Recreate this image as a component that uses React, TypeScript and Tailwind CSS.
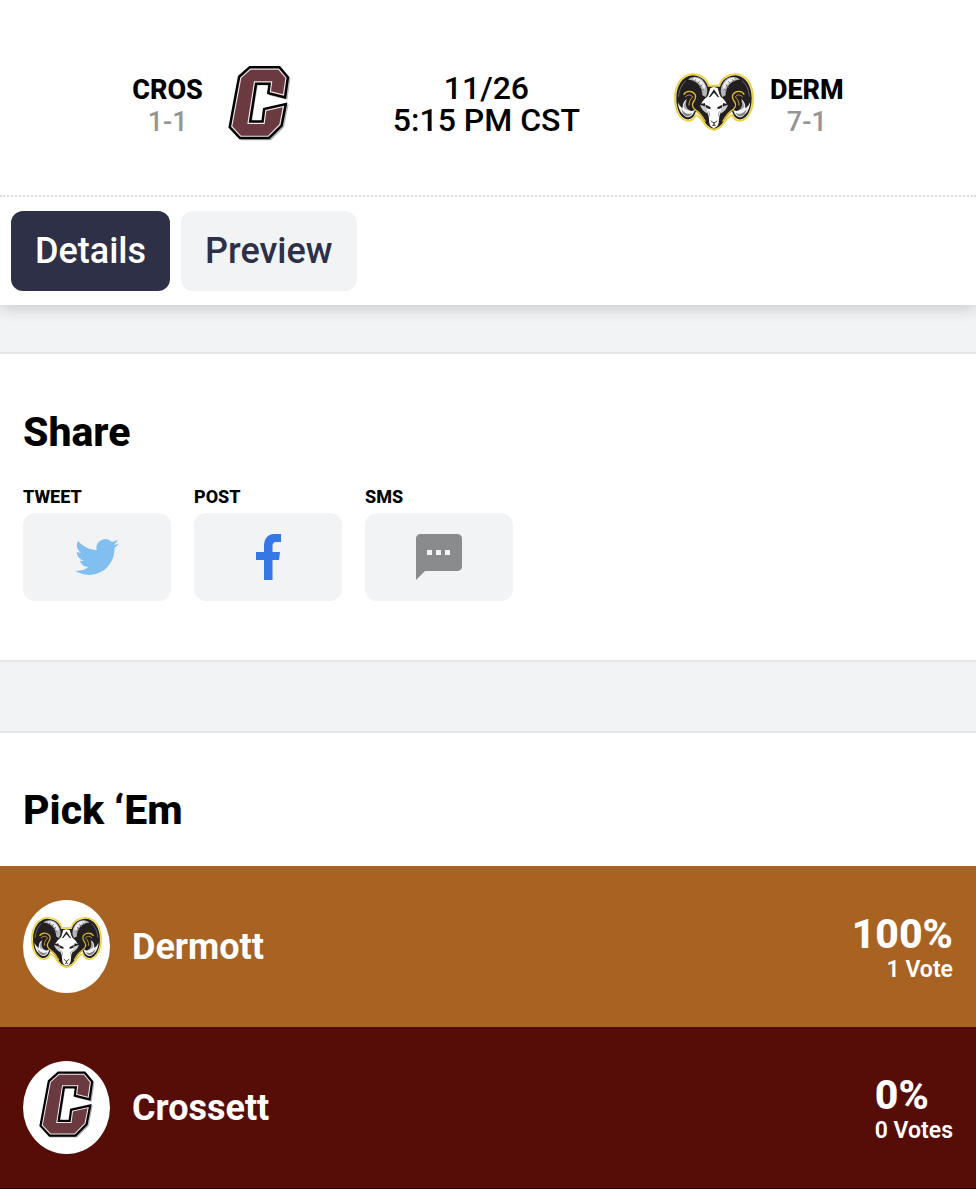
import type { ReactNode } from "react";

function CrossettLogo({ className }: { className?: string }) {
  const c =
    "107,44 190,44 211,69 204,118 168,109 172,79 117,79 97,207 149,207 154,168 203,157 193,208 159,242 78,242 52,214 79,69";
  return (
    <svg viewBox="12 21 240 240" className={className} role="img" aria-label="Crossett">
      <polygon points={c} transform="translate(5 4)" fill="#b5b5b5" stroke="#b5b5b5" strokeWidth="20" />
      <polygon points={c} fill="#000" stroke="#000" strokeWidth="22" />
      <polygon points={c} fill="#fff" stroke="#f3e9ea" strokeWidth="7" />
      <polygon points={c} fill="#6b3a41" />
      <polygon points="128,91 158,91 153,122 222,139 139,152 135,194 112,194" fill="#fff" />
    </svg>
  );
}

function RamHalf() {
  return (
    <g>
      <path
        d="M147 79 L130 79 C124 56 104 43 80 44 C50 46 29 76 29 114 C28 150 42 180 65 184 C77 186 86 180 91 168 C99 168 107 178 113 187 C121 201 133 210 147 212 Z"
        fill="#fbf3c4"
        stroke="#ecd03a"
        strokeWidth="5"
      />
      <path
        d="M147 82 L128 82 C122 60 102 48 80 48 C52 50 33 80 33 115 C32 148 45 176 65 180 C75 181 84 176 88 165 L92 156 C102 162 108 172 116 184 C124 198 134 206 147 208 Z"
        fill="#231f20"
      />
      {/* horn base */}
      <path
        d="M83 54 C99 50 115 60 123 80 C127 92 127 101 121 113 L111 108 C112 91 104 76 90 67 C82 62 75 61 68 61 C72 57 77 55 83 54 Z"
        fill="#b4b6b9"
      />
      <path d="M86 55 C102 54 114 65 120 82 L116 92 C111 78 101 65 84 61 Z" fill="#f2f2f3" />
      <path
        d="M91 60 L86 67 M103 66 L95 74 M111 76 L102 84 M116 89 L107 96"
        stroke="#6d6f72"
        strokeWidth="3"
        fill="none"
      />
      {/* ridges on the outer horn */}
      <path
        d="M40 112 C41 92 49 74 62 64"
        stroke="#8b8d90"
        strokeWidth="2"
        fill="none"
      />
      {/* curl */}
      <path
        d="M55 106 C62 93 80 93 89 105 C94 114 89 121 84 128 C77 138 84 148 93 154 C104 161 112 172 120 187"
        stroke="#e0bd2d"
        strokeWidth="4"
        fill="none"
      />
      <path d="M60 113 C68 104 78 106 82 113 C76 119 70 127 71 139" stroke="#c9a62a" strokeWidth="3" fill="none" />
      <path d="M65 119 C57 130 60 147 72 153 C78 156 84 155 89 150 C84 171 70 180 57 169 C45 160 38 145 38 129 C42 138 46 143 52 147 C51 135 56 124 65 119 Z" fill="#f4f4f4" />
      <path d="M47 147 C55 162 68 168 81 160 C74 174 62 175 53 163 Z" fill="#85878b" />
      <path d="M64 124 C59 134 62 147 72 153 C63 153 56 148 55 141 C55 134 58 128 64 124 Z" fill="#a4a6aa" />
      {/* ear */}
      <path d="M108 133 C115 119 127 109 137 111 L131 132 C123 129 116 133 108 133 Z" fill="#fff" />
      <path d="M104 136 L122 142 L127 163 C115 156 107 148 104 136 Z" fill="#c8cacd" />
    </g>
  );
}

function DermottLogo({ className }: { className?: string }) {
  return (
    <svg viewBox="26 8 240 240" className={className} role="img" aria-label="Dermott">
      <RamHalf />
      <g transform="translate(292 0) scale(-1 1)">
        <RamHalf />
      </g>
      {/* face */}
      <path
        d="M146 83 L135 86 L129 106 L118 126 L121 143 L130 171 L132 191 C134 201 140 205 146 206 C152 205 158 201 160 191 L162 171 L171 143 L174 126 L163 106 L157 86 Z"
        fill="#fff"
      />
      <path d="M130 114 L146 90 L162 114 L157 113 L146 100 L135 113 Z" fill="#231f20" />
      <path
        d="M121 136 L136 144 L135 150 L123 146 Z M171 136 L156 144 L157 150 L169 146 Z"
        fill="#231f20"
      />
      <path d="M127 152 L134 162 L134 176 Z M165 152 L158 162 L158 176 Z" fill="#a9abae" />
      <path
        d="M137 184 L142 189 L146 191 L150 189 L155 184 M146 191 L146 197 M141 199 L146 197 L151 199"
        fill="none"
        stroke="#231f20"
        strokeWidth="3"
      />
    </svg>
  );
}

function TwitterIcon() {
  return (
    <svg viewBox="0 0 24 24" className="size-[44px]" fill="#82bff1" aria-hidden="true">
      <path d="M23.953 4.57a10 10 0 01-2.825.775 4.958 4.958 0 002.163-2.723c-.951.555-2.005.959-3.127 1.184a4.92 4.92 0 00-8.384 4.482C7.69 8.095 4.067 6.13 1.64 3.162a4.822 4.822 0 00-.666 2.475c0 1.71.87 3.213 2.188 4.096a4.904 4.904 0 01-2.228-.616v.06a4.923 4.923 0 003.946 4.827 4.996 4.996 0 01-2.212.085 4.936 4.936 0 004.604 3.417 9.867 9.867 0 01-6.102 2.105c-.39 0-.779-.023-1.17-.067a13.995 13.995 0 007.557 2.209c9.053 0 13.998-7.496 13.998-13.985 0-.21 0-.42-.015-.63A9.935 9.935 0 0024 4.59z" />
    </svg>
  );
}

function FacebookIcon() {
  return (
    <svg viewBox="0 0 25 46" className="h-[46px] w-[25px]" fill="#3578e5" aria-hidden="true">
      <path d="M8 46V26H0v-8h8v-6C8 4 12.500 0 18 0h7v8h-4.500c-3 0-4 1.500-4 4v6H24l-1 8h-6.500v20Z" />
    </svg>
  );
}

function SmsIcon() {
  return (
    <svg viewBox="0 0 46 46" className="size-[46px]" aria-hidden="true">
      <path
        d="M4.500 0h37A4.500 4.500 0 0 1 46 4.500v28a4.500 4.500 0 0 1-4.500 4.500H9l-9 9V4.500A4.500 4.500 0 0 1 4.500 0Z"
        fill="#8a8b8d"
      />
      <path d="M11 16h5v5h-5zM20 16h5v5h-5zM29 16h5v5h-5z" fill="#f2f3f5" />
    </svg>
  );
}

function TeamLabel({ abbr, record }: { abbr: string; record: string }) {
  return (
    <div className="pt-2 text-center text-[27px] leading-8">
      <div className="font-extrabold">{abbr}</div>
      <div className="font-medium text-[#959595]">{record}</div>
    </div>
  );
}

function ShareButton({ label, children }: { label: string; children: ReactNode }) {
  const id = `share-${label.toLowerCase()}`;
  return (
    <div className="w-[148px]">
      <div id={id} className="text-lg leading-6 font-extrabold uppercase">
        {label}
      </div>
      <button
        type="button"
        aria-labelledby={id}
        className="mt-1 flex h-[88px] w-full items-center justify-center rounded-xl bg-[#f2f3f5]"
      >
        {children}
      </button>
    </div>
  );
}

type PickProps = {
  name: string;
  percent: string;
  votes: string;
  logo: ReactNode;
  className: string;
};

function PickRow({ name, percent, votes, logo, className }: PickProps) {
  return (
    <button
      type="button"
      className={`flex w-full items-center px-[23px] text-left text-white ${className}`}
    >
      <span className="flex h-[93px] w-[87px] shrink-0 justify-center rounded-[50%] bg-white pt-[7px]">
        {logo}
      </span>
      <span className="ml-[22px] flex-1 text-4xl font-bold">{name}</span>
      <span className="flex flex-col pt-1">
        <span className="text-[41px] leading-[42px] font-extrabold">{percent}</span>
        <span className="self-end text-[23px] leading-[30px] font-semibold">{votes}</span>
      </span>
    </button>
  );
}

export default function App() {
  return (
    <div className="min-h-screen bg-white font-['Roboto',sans-serif] text-black">
      {/* Scoreboard */}
      <header className="relative bg-white shadow-[0_4px_14px_rgba(0,0,0,0.16)]">
        <div className="flex h-[195px] items-center justify-center gap-[94px] pt-[9px]">
          <div className="flex items-center gap-4">
            <TeamLabel abbr="CROS" record="1-1" />
            <CrossettLogo className="size-20" />
          </div>
          <p className="pt-1 text-center text-[32px] leading-8 font-medium">
            11/26
            <br />
            5:15 PM CST
          </p>
          <div className="flex items-center gap-4">
            <DermottLogo className="size-20" />
            <TeamLabel abbr="DERM" record="7-1" />
          </div>
        </div>

        <nav className="flex gap-[11px] border-t-2 border-dotted border-[#dcdde1] px-[11px] py-[14px]">
          <button type="button" className="h-20 rounded-xl bg-[#2e3047] px-6 text-4xl font-medium text-white">
            Details
          </button>
          <button type="button" className="h-20 rounded-xl bg-[#f2f3f5] px-6 text-4xl font-medium text-[#2e3047]">
            Preview
          </button>
        </nav>
      </header>

      <main>
        <div className="h-[47px] bg-[#f2f3f5]" />

        {/* Share */}
        <section className="border-y-2 border-[#e5e6e8] px-[23px] pt-[54px] pb-[59px]">
          <h2 className="text-[41px] leading-[48px] font-extrabold">Share</h2>
          <div className="mt-[29px] flex gap-[23px]">
            <ShareButton label="Tweet">
              <TwitterIcon />
            </ShareButton>
            <ShareButton label="Post">
              <FacebookIcon />
            </ShareButton>
            <ShareButton label="SMS">
              <SmsIcon />
            </ShareButton>
          </div>
        </section>

        <div className="h-[69px] bg-[#f2f3f5]" />

        {/* Pick 'Em */}
        <section className="border-t-2 border-[#e5e6e8] pt-[53px]">
          <h2 className="px-[23px] text-[41px] leading-[48px] font-extrabold">Pick ‘Em</h2>
          <div className="mt-8">
            <PickRow
              name="Dermott"
              percent="100%"
              votes="1 Vote"
              logo={<DermottLogo className="size-[71px]" />}
              className="h-[161px] bg-[#a86323]"
            />
            <PickRow
              name="Crossett"
              percent="0%"
              votes="0 Votes"
              logo={<CrossettLogo className="size-[71px]" />}
              className="h-[162px] border-b border-[#1f0503] bg-[#560c07]"
            />
          </div>
        </section>
      </main>
    </div>
  );
}
